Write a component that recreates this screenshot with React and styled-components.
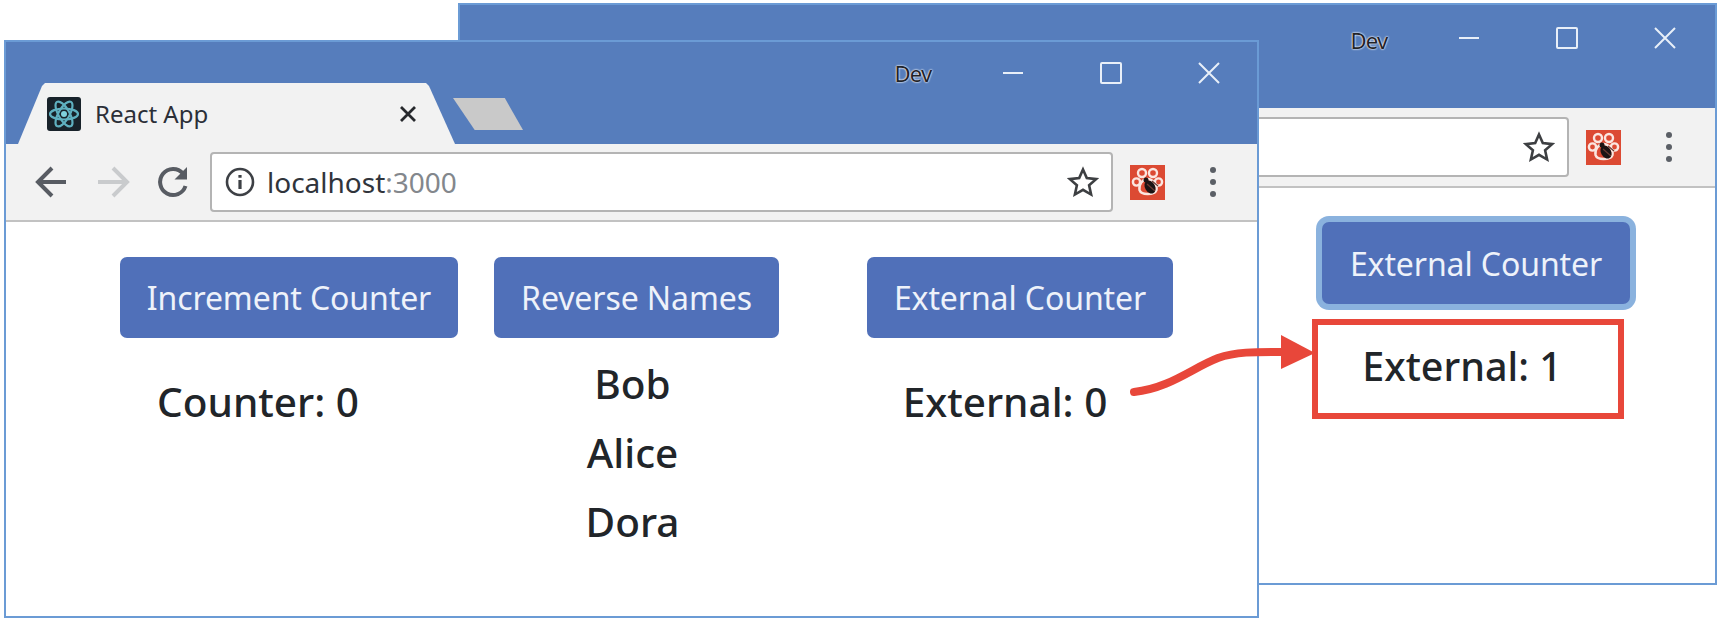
import React from 'react'
import styled, { createGlobalStyle } from 'styled-components'

const FONT = `"Noto Sans", "Open Sans", sans-serif`

const GlobalStyle = createGlobalStyle`
  html, body {
    margin: 0;
    padding: 0;
    background: #fff;
  }
  body {
    font-family: ${FONT};
    color: #212529;
  }
`

const Stage = styled.div`
  position: relative;
  width: 1721px;
  height: 621px;
  overflow: hidden;
  background: #fff;
`

const Win = styled.div`
  position: absolute;
  left: ${p => p.$left}px;
  top: ${p => p.$top}px;
  width: ${p => p.$width}px;
  height: ${p => p.$height}px;
  box-sizing: border-box;
  display: flex;
  flex-direction: column;
  border: 2px solid #6b9bd5;
  background: #fff;
`

const TitleBar = styled.div`
  height: ${p => p.$height}px;
  flex: none;
  display: flex;
  align-items: flex-start;
  background: #567dbc;
`

const Tab = styled.div`
  align-self: flex-end;
  width: 437px;
  height: 61px;
  margin-left: 12px;
  padding: 0 38px 0 29px;
  box-sizing: border-box;
  display: flex;
  align-items: center;
  background: #f2f2f2;
  clip-path: polygon(0 100%, 24px 3px, 27px 0, 408px 0, 411px 3px, 100% 100%);
`

const TabTitle = styled.span`
  margin-left: 14px;
  font-size: 24px;
  color: #2b2f38;
  white-space: nowrap;
`

const TabClose = styled.svg`
  margin-left: auto;
  width: 18px;
  height: 18px;
`

const NewTab = styled.div`
  align-self: flex-end;
  width: 70px;
  height: 32px;
  margin: 0 0 14px -2px;
  background: #c9c9c9;
  clip-path: polygon(0 0, 74% 0, 100% 100%, 31% 100%);
`

const Caption = styled.div`
  margin-left: auto;
  margin-right: ${p => p.$shift}px;
  padding-top: ${p => p.$pad}px;
  display: flex;
`

const CaptionSlot = styled.div`
  width: 98px;
  height: 30px;
  display: flex;
  align-items: center;
  justify-content: center;
`

const DevLabel = styled.span`
  position: relative;
  top: ${p => p.$drop}px;
  left: -2px;
  font-size: 22px;
  letter-spacing: -0.7px;
  color: #1f2329;
  text-shadow: 0 0 2px #fff, 0 0 2px #fff;
`

const CaptionIcon = styled.svg`
  width: 24px;
  height: 24px;
  fill: none;
  stroke: #e8eff8;
  stroke-width: 2;
`

const Toolbar = styled.div`
  height: ${p => p.$height}px;
  flex: none;
  box-sizing: border-box;
  display: flex;
  align-items: center;
  padding: 0 ${p => p.$padRight}px 0 ${p => p.$padLeft}px;
  background: #f2f2f2;
  border-bottom: 2px solid #c2c2c2;
`

const NavButton = styled.svg`
  width: 60px;
  height: 36px;
  flex: none;
  fill: none;
  stroke: ${p => (p.$off ? '#c9cbcd' : '#585c63')};
  stroke-width: 4;
`

const Omnibox = styled.div`
  flex: 1;
  height: 60px;
  margin-left: ${p => p.$gap}px;
  box-sizing: border-box;
  display: flex;
  align-items: center;
  padding: 0 12px 0 13px;
  background: #fff;
  border: 2px solid #b4b4b4;
  border-radius: 4px;
`

const Address = styled.span`
  margin-left: 12px;
  font-size: 28px;
  color: #30343b;
  em {
    font-style: normal;
    color: #83878c;
  }
`

const StarIcon = styled.svg`
  margin-left: auto;
  width: 32px;
  height: 32px;
  fill: none;
  stroke: #3d3f42;
  stroke-width: 2.6;
`

const ExtIcon = styled.svg`
  margin-left: 17px;
  width: 35px;
  height: 35px;
  flex: none;
`

const MenuDots = styled.div`
  margin-left: 29px;
  width: 38px;
  display: flex;
  flex-direction: column;
  align-items: center;
  gap: 6px;
  i {
    width: 6px;
    height: 6px;
    border-radius: 50%;
    background: #5b5f66;
  }
`

const Content = styled.div`
  flex: 1;
  display: flex;
  justify-content: ${p => p.$align};
  padding: ${p => p.$pad};
`

const Column = styled.div`
  width: ${p => p.$width}px;
  margin-right: ${p => p.$gap || 0}px;
  display: flex;
  flex-direction: column;
  align-items: center;
`

const ActionButton = styled.div`
  width: 100%;
  height: ${p => (p.$focused ? 82 : 81)}px;
  box-sizing: border-box;
  flex: none;
  display: flex;
  align-items: center;
  justify-content: center;
  font-size: 32px;
  letter-spacing: -0.1px;
  color: #eef2fa;
  background: #5070b9;
  border-radius: 7px;
  box-shadow: ${p => (p.$focused ? '0 0 0 6px #8ab2de' : 'none')};
`

const ValueLine = styled.div`
  height: 69px;
  line-height: 69px;
  font-size: 40.500px;
  font-weight: 500;
  color: #212529;
  white-space: nowrap;
  margin-top: ${p => p.$top || 0}px;
  margin-right: ${p => p.$inset || 0}px;
`

const Callout = styled.div`
  width: 312px;
  height: 100px;
  margin: 15px 0 0 -16px;
  box-sizing: border-box;
  display: flex;
  align-items: center;
  justify-content: center;
  padding: 0 12px 6px 0;
  border: 6px solid #e8473a;
  font-size: 39.500px;
  font-weight: 500;
`

const ArrowLayer = styled.svg`
  position: absolute;
  left: 0;
  top: 0;
  width: 1721px;
  height: 621px;
  pointer-events: none;
`

const CaptionControls = ({ shift, pad, drop }) => (
  <Caption $shift={shift} $pad={pad}>
    <CaptionSlot><DevLabel $drop={drop}>Dev</DevLabel></CaptionSlot>
    <CaptionSlot>
      <CaptionIcon viewBox="0 0 24 24"><path d="M2 12h20" /></CaptionIcon>
    </CaptionSlot>
    <CaptionSlot>
      <CaptionIcon viewBox="0 0 24 24"><rect x="2" y="2" width="20" height="20" rx="1" /></CaptionIcon>
    </CaptionSlot>
    <CaptionSlot>
      <CaptionIcon viewBox="0 0 24 24"><path d="M2 2l20 20M22 2L2 22" /></CaptionIcon>
    </CaptionSlot>
  </Caption>
)

const ReactFavicon = () => (
  <svg width="34" height="34" viewBox="0 0 34 34" style={{ flex: 'none' }}>
    <rect width="34" height="34" rx="3" fill="#18222a" />
    <g fill="none" stroke="#5fb0c0" strokeWidth="2.2">
      <ellipse cx="17" cy="17" rx="14" ry="5.500" />
      <ellipse cx="17" cy="17" rx="14" ry="5.500" transform="rotate(60 17 17)" />
      <ellipse cx="17" cy="17" rx="14" ry="5.500" transform="rotate(120 17 17)" />
    </g>
    <circle cx="17" cy="17" r="3" fill="#7fd0dc" />
  </svg>
)

const PawExtension = () => (
  <ExtIcon viewBox="0 0 35 35">
    <rect width="35" height="35" fill="#dc4a33" />
    <g fill="none" stroke="#fbe6e0" strokeWidth="2.4">
      <circle cx="12" cy="8" r="4" />
      <circle cx="23" cy="8" r="4" />
      <circle cx="6.500" cy="17" r="3.600" />
      <circle cx="28.500" cy="17" r="3.600" />
      <path d="M17.500 14c-5 0-9 6-8 11 1 3 4 4 8 4s8-1 9-4c1-5-4-11-9-11z" />
    </g>
    <ellipse cx="20" cy="22" rx="5" ry="7" fill="#1b1414" transform="rotate(-30 20 22)" />
    <circle cx="16" cy="15" r="2.500" fill="#1b1414" />
    <path d="M17 19l8 7M22 16l6 5" stroke="#6b3a32" strokeWidth="1.200" />
  </ExtIcon>
)

const Star = () => (
  <StarIcon viewBox="0 0 32 32">
    <path d="M16 3.500l3.800 8.600 9.300 1-7 6.200 2 9.200L16 23.800l-8.100 4.700 2-9.200-7-6.200 9.300-1z" />
  </StarIcon>
)

const Dots = () => (
  <MenuDots><i /><i /><i /></MenuDots>
)

const App = () => (
  <Stage>
    <GlobalStyle />

    <Win $left={458} $top={3} $width={1259} $height={582}>
      <TitleBar $height={103}>
        <CaptionControls shift={1} pad={18} drop={2} />
      </TitleBar>
      <Toolbar $height={80} $padLeft={0} $padRight={27}>
        <Omnibox $gap={0}><Star /></Omnibox>
        <PawExtension />
        <Dots />
      </Toolbar>
      <Content $align="flex-end" $pad="34px 85px 0 0">
        <Column $width={308}>
          <ActionButton $focused>External Counter</ActionButton>
          <Callout>External: 1</Callout>
        </Column>
      </Content>
    </Win>

    <Win $left={4} $top={40} $width={1255} $height={578}>
      <TitleBar $height={102}>
        <Tab>
          <ReactFavicon />
          <TabTitle>React App</TabTitle>
          <TabClose viewBox="0 0 18 18">
            <path d="M2 2l14 14M16 2L2 16" stroke="#26282c" strokeWidth="2.800" fill="none" />
          </TabClose>
        </Tab>
        <NewTab />
        <CaptionControls shift={-1} pad={16} drop={0} />
      </TitleBar>
      <Toolbar $height={78} $padLeft={17} $padRight={25}>
        <NavButton viewBox="0 0 60 36">
          <path d="M43 18H15M29 4L15 18l14 14" />
        </NavButton>
        <NavButton $off viewBox="0 0 60 36">
          <path d="M15 18h28M30 4l14 14-14 14" />
        </NavButton>
        <NavButton viewBox="0 0 60 36">
          <path d="M40 9.500A13 13 0 1 0 42.500 22" />
          <path d="M44 3v12.500H31.500z" fill="#585c63" stroke="none" />
        </NavButton>
        <Omnibox $gap={7}>
          <svg width="30" height="30" viewBox="0 0 30 30" style={{ flex: 'none' }}>
            <circle cx="15" cy="15" r="13" fill="none" stroke="#3d4045" strokeWidth="2.600" />
            <path d="M15 13v9M15 8v2.800" stroke="#3d4045" strokeWidth="3.200" />
          </svg>
          <Address>localhost<em>:3000</em></Address>
          <Star />
        </Omnibox>
        <PawExtension />
        <Dots />
      </Toolbar>
      <Content $align="flex-start" $pad="35px 0 0 114px">
        <Column $width={338} $gap={36}>
          <ActionButton>Increment Counter</ActionButton>
          <ValueLine $top={29} $inset={62}>Counter: 0</ValueLine>
        </Column>
        <Column $width={285} $gap={88}>
          <ActionButton>Reverse Names</ActionButton>
          <ValueLine $top={11} $inset={8}>Bob</ValueLine>
          <ValueLine $inset={8}>Alice</ValueLine>
          <ValueLine $inset={8}>Dora</ValueLine>
        </Column>
        <Column $width={306}>
          <ActionButton>External Counter</ActionButton>
          <ValueLine $top={29} $inset={30}>External: 0</ValueLine>
        </Column>
      </Content>
    </Win>

    <ArrowLayer viewBox="0 0 1721 621">
      <path d="M1134 392c36-4 58-24 84-34 20-7 42-6 68-6" fill="none" stroke="#e8473a" strokeWidth="8" strokeLinecap="round" />
      <path d="M1281 335l34 18-34 16z" fill="#e8473a" />
    </ArrowLayer>
  </Stage>
)

export default App
